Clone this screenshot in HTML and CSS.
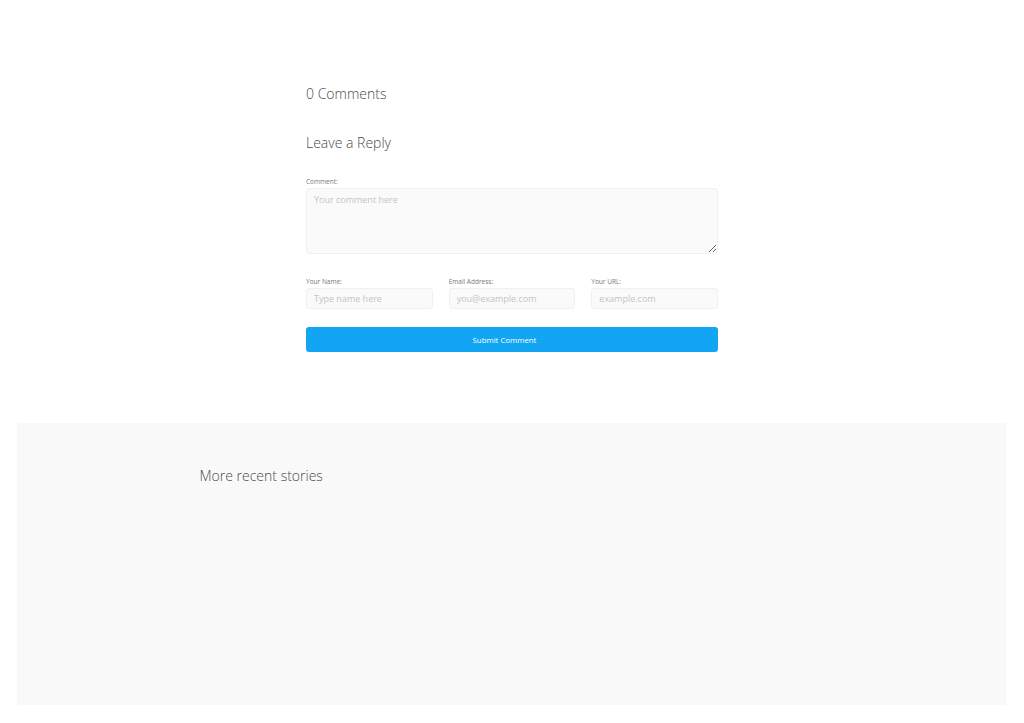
FILE: index.html
```html
<!DOCTYPE html>
<html lang="en">
  <head>
    <meta charset="UTF-8" />
    <meta name="viewport" content="width=device-width, initial-scale=1.0" />
    <title>Comments</title>
    <link rel="stylesheet" href="styles.css">
  </head>
  <body>
    <div class="comments">
      <h3 class="comments-count">0 Comments</h3>
      <h3 class="reply-title">Leave a Reply</h3>

      <form class="reply-form" onsubmit="return false">
        <label class="field">
          <span>Comment:</span>
          <textarea placeholder="Your comment here"></textarea>
        </label>

        <div class="field-row">
          <label class="field">
            <span>Your Name:</span>
            <input type="text" placeholder="Type name here" />
          </label>
          <label class="field">
            <span>Email Address:</span>
            <input type="email" placeholder="you@example.com" />
          </label>
          <label class="field">
            <span>Your URL:</span>
            <input type="text" placeholder="example.com" />
          </label>
        </div>

        <button type="submit">Submit Comment</button>
      </form>
    </div>

    <div class="recent">
      <div class="recent-inner">
        <h3>More recent stories</h3>
      </div>
    </div>
  </body>
</html>
```

FILE: styles.css
```css
/* General Styles */
body {
  font-family: "Open Sans", Arial, sans-serif;
  margin: 0;
  background: white;
  color: #444;
}

/* Comments */
.comments {
  width: 412px;
  margin: 0 auto;
  padding-top: 83px;
}

.comments h3 {
  font-size: 14px;
  font-weight: 300;
  margin: 0;
  line-height: 22px;
  color: #4a4a4a;
}

.reply-title {
  margin-top: 27px !important;
}

/* Form */
.reply-form {
  margin-top: 23px;
}

.field {
  display: block;
}

.field span {
  display: block;
  font-size: 6.5px;
  color: #777;
  line-height: 10px;
  margin-bottom: 1px;
}

textarea,
input {
  display: block;
  width: 100%;
  box-sizing: border-box;
  background: #fafafa;
  border: 1px solid #f0f0f0;
  border-radius: 3px;
  font-family: inherit;
  font-size: 9px;
  color: #555;
  padding: 5px 7px;
}

textarea {
  height: 66px;
  padding-top: 4px;
  resize: vertical;
}

input {
  height: 21px;
}

textarea::placeholder,
input::placeholder {
  color: #c4c4c4;
}

.field-row {
  display: grid;
  grid-template-columns: repeat(3, 1fr);
  gap: 16px;
  margin-top: 23px;
}

button {
  display: block;
  width: 100%;
  height: 25px;
  margin-top: 18px;
  padding: 0 15px 0 0;
  background: #12a5f4;
  color: white;
  border: none;
  border-radius: 3px;
  font-family: inherit;
  font-size: 7.8px;
  cursor: pointer;
}

/* More recent stories */
.recent {
  background: #f9f9f9;
  margin: 71px 18px 0 17px;
  height: 282px;
  overflow: hidden;
}

.recent-inner {
  width: 624px;
  margin: 0 auto;
  padding-top: 42px;
}

.recent h3 {
  font-size: 14px;
  font-weight: 300;
  color: #4a4a4a;
  margin: 0;
  line-height: 22px;
}
```
